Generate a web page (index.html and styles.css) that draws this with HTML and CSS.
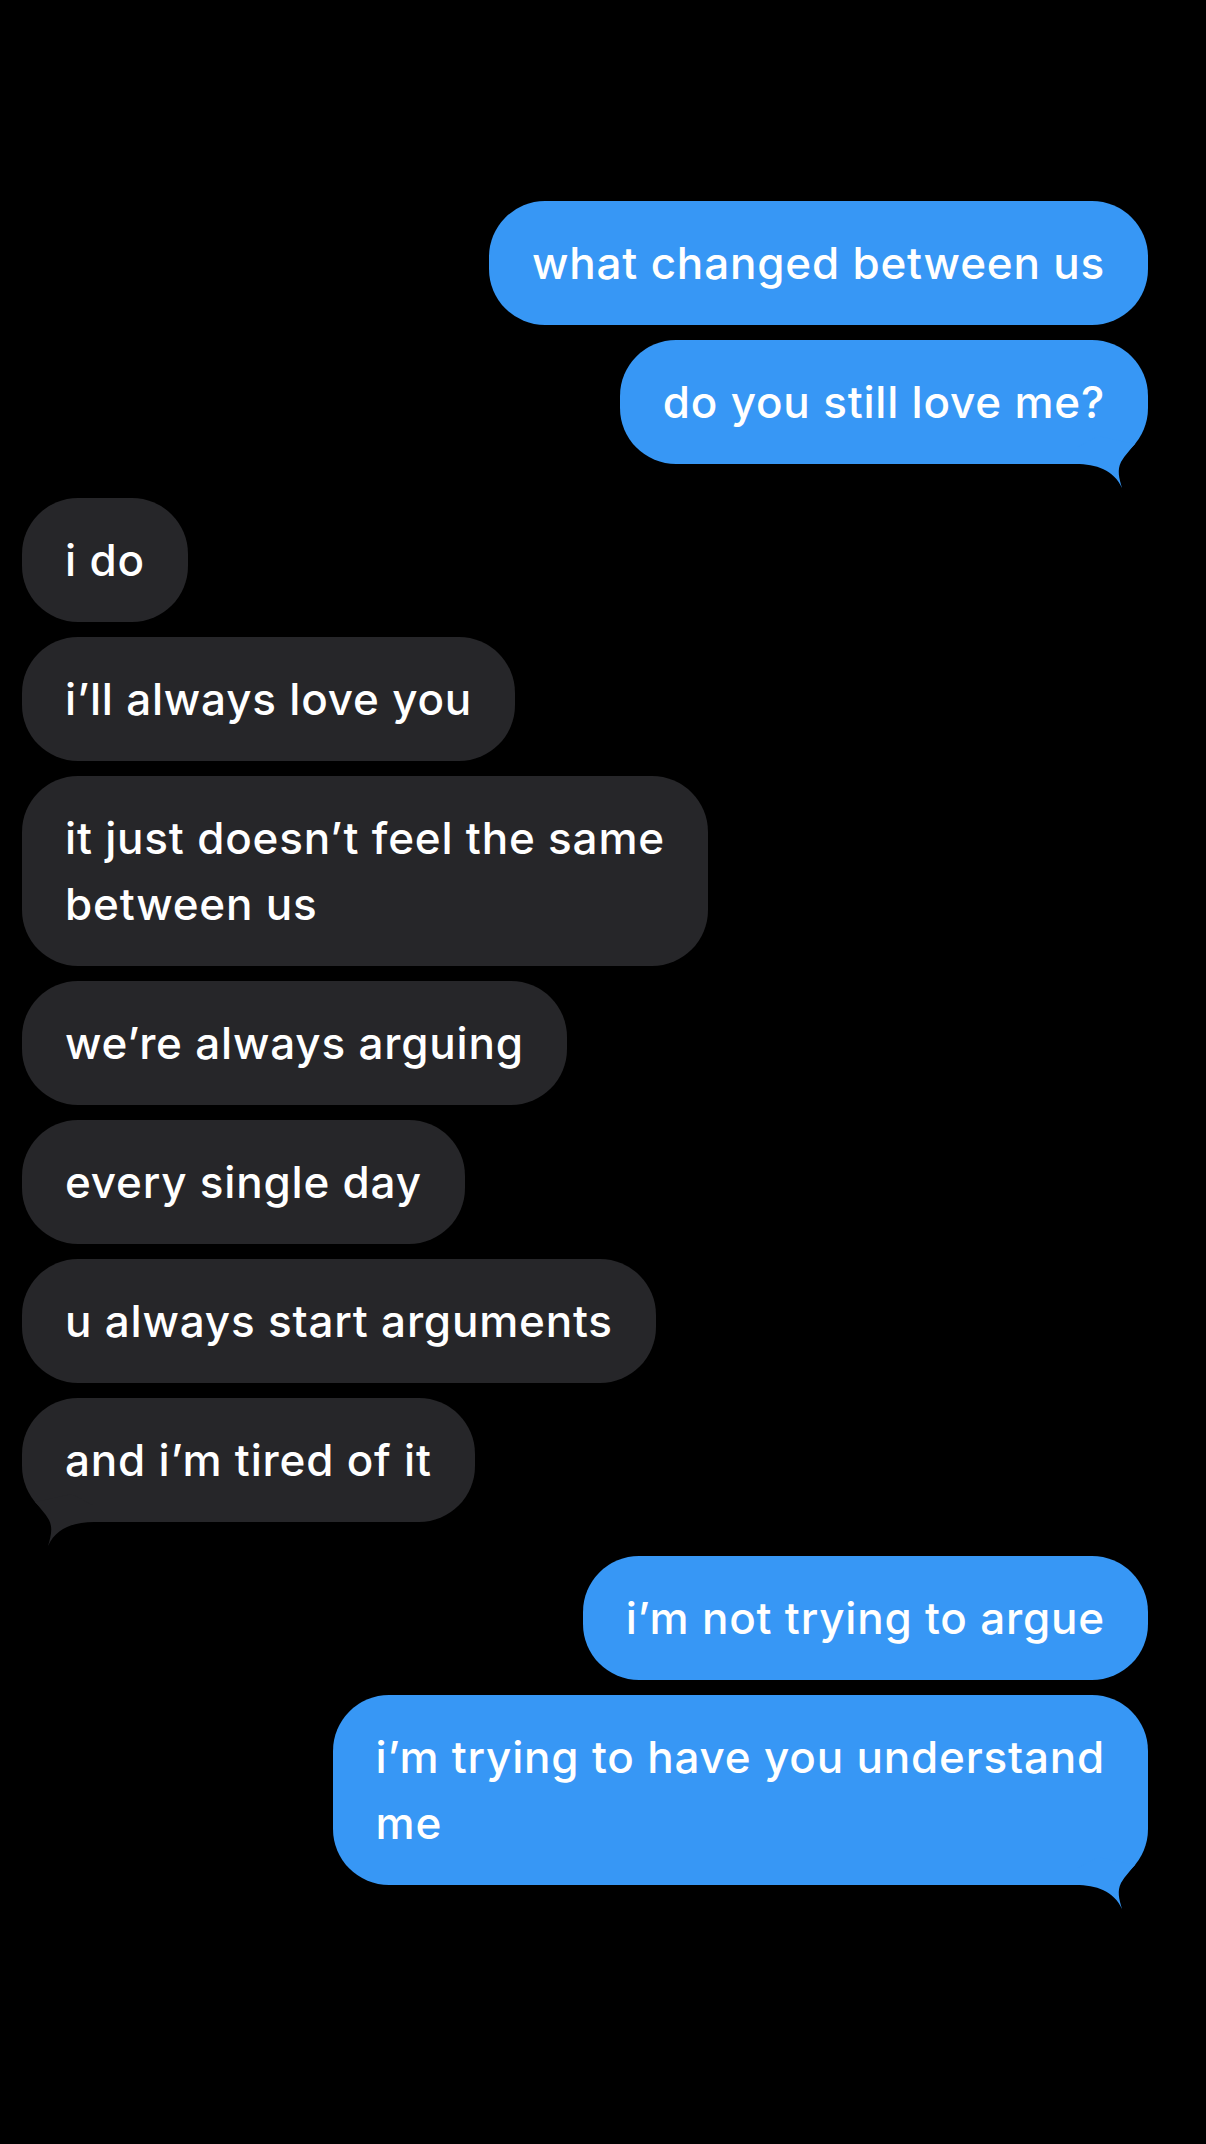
FILE: index.html
```html
<!DOCTYPE html>
<html lang="en">
<head>
  <meta charset="UTF-8">
  <meta name="viewport" content="width=device-width, initial-scale=1.0">
  <title>Messages</title>
  <link rel="stylesheet" href="styles.css">
</head>
<body>
  <div class="thread">
    <div class="msg sent">what changed between us</div>
    <div class="msg sent">do you still love me?
      <svg class="tail" viewBox="0 0 80 80"><path d="M8 40 L8 56 C28 56 46 62 54 80 C51 70 49 62 53 54 C57 47 62 42 67 36 L30 28 Z"/></svg>
    </div>

    <div class="msg received first">i do</div>
    <div class="msg received">i’ll always love you</div>
    <div class="msg received">it just doesn’t feel the same<br>between us</div>
    <div class="msg received">we’re always arguing</div>
    <div class="msg received">every single day</div>
    <div class="msg received">u always start arguments</div>
    <div class="msg received">and i’m tired of it
      <svg class="tail" viewBox="0 0 80 80"><path d="M8 40 L8 56 C28 56 46 62 54 80 C51 70 49 62 53 54 C57 47 62 42 67 36 L30 28 Z"/></svg>
    </div>

    <div class="msg sent first">i’m not trying to argue</div>
    <div class="msg sent">i’m trying to have you understand<br>me
      <svg class="tail" viewBox="0 0 80 80"><path d="M8 40 L8 56 C28 56 46 62 54 80 C51 70 49 62 53 54 C57 47 62 42 67 36 L30 28 Z"/></svg>
    </div>
  </div>
</body>
</html>
```

FILE: styles.css
```css
body { margin: 0; background: #000; min-height: 2144px; font-family: Inter, "Liberation Sans", sans-serif; }
.thread { display: flex; flex-direction: column; gap: 15px; padding: 201px 58px 0 22px; }
.msg {
  position: relative; padding: 29px 43px; border-radius: 56px;
  font-size: 44px; font-weight: 500; letter-spacing: 0.8px; line-height: 66px;
  color: #fff; white-space: nowrap;
}
.msg.first { margin-top: 19px; }
.sent { align-self: flex-end; background: #3797f5; }
.received { align-self: flex-start; background: #262629; }
.tail { position: absolute; bottom: -24px; width: 80px; height: 80px; }
.sent .tail { right: 0; fill: #3797f5; }
.received .tail { left: 0; fill: #262629; transform: scaleX(-1); }
```
